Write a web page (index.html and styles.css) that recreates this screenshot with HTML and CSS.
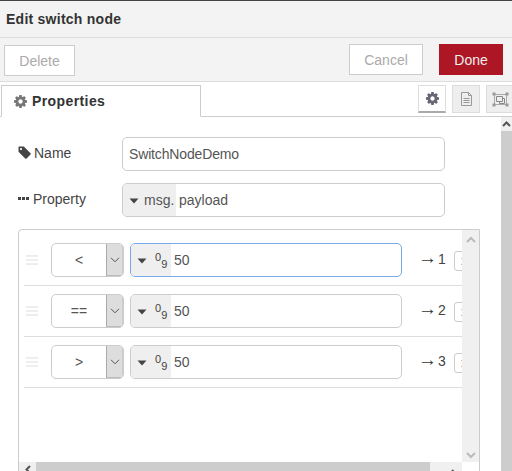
FILE: index.html
```html
<!DOCTYPE html>
<html lang="en">

<head>
    <meta charset="UTF-8">
    <meta name="viewport" content="width=device-width, initial-scale=1.0">
    <title>Edit switch node</title>
    <link rel="stylesheet" href="styles.css">
</head>

<body>
    <svg class="icon-defs" width="0" height="0">
        <symbol id="gear" viewBox="128 128 1536 1536">
            <path d="M1152 896q0-106-75-181t-181-75-181 75-75 181 75 181 181 75 181-75 75-181zm512-109v222q0 12-8 23t-20 13l-185 28q-19 54-39 91 35 50 107 138 10 12 10 25t-9 23q-27 37-99 108t-94 71q-12 0-26-9l-138-108q-44 23-91 38-16 136-29 186-7 28-36 28h-222q-14 0-24.500-8.500t-11.500-21.500l-28-184q-49-16-90-37l-141 107q-10 9-25 9-14 0-25-11-126-114-165-168-7-10-7-23 0-12 8-23 15-21 51-66.500t54-70.500q-27-50-41-99l-183-27q-13-2-21-12.500t-8-23.500v-222q0-12 8-23t19-13l186-28q14-46 39-92-40-57-107-138-10-12-10-24 0-10 9-23 26-36 98.500-107.500t94.500-71.500q13 0 26 10l138 107q44-23 91-38 16-136 29-186 7-28 36-28h222q14 0 24.500 8.500t11.500 21.500l28 184q49 16 90 37l142-107q9-9 24-9 13 0 25 10 129 119 165 170 7 8 7 22 0 12-8 23-15 21-51 66.500t-54 70.500q26 50 41 98l183 28q13 2 21 12.500t8 23.500z" fill="currentColor"></path>
        </symbol>
        <symbol id="caret" viewBox="0 0 10 6">
            <path d="M0.500 0.500h9L5 5.500z" fill="currentColor"></path>
        </symbol>
        <symbol id="grip" viewBox="0 0 12 10">
            <path d="M0 0h12v2H0zM0 4h12v2H0zM0 8h12v2H0z" fill="currentColor"></path>
        </symbol>
        <symbol id="chevron" viewBox="0 0 10 6">
            <path d="M1 0.800l4 4 4-4" fill="none" stroke="currentColor" stroke-width="1"></path>
        </symbol>
        <symbol id="chevron-bold" viewBox="0 0 10 7">
            <path d="M1 1l4 4 4-4" fill="none" stroke="currentColor" stroke-width="2"></path>
        </symbol>
    </svg>

    <header class="tray-header">Edit switch node</header>

    <div class="tray-toolbar">
        <button class="btn btn-delete">Delete</button>
        <div class="toolbar-right">
            <button class="btn btn-cancel">Cancel</button>
            <button class="btn btn-done">Done</button>
        </div>
    </div>

    <div class="tabs">
        <div class="tab-active">
            <svg class="tab-gear"><use href="#gear"></use></svg>
            <span>Properties</span>
        </div>
        <div class="tab-icons">
            <div class="tab-icon selected">
                <svg class="tab-gear dark"><use href="#gear"></use></svg>
            </div>
            <div class="tab-icon">
                <svg width="13" height="14" viewBox="0 0 13 14">
                    <path d="M1.500 0.500h7l3 3v10h-10zM8.500 0.500v3h3M3.500 6.500h6M3.500 8.500h6M3.500 10.500h6" fill="none" stroke="#999" stroke-width="1"></path>
                </svg>
            </div>
            <div class="tab-icon">
                <svg width="17" height="15" viewBox="0 0 17 15">
                    <path d="M2.500 2.500h12v10h-12z" fill="none" stroke="#aaa" stroke-width="1"></path>
                    <path d="M4.500 4.500h6v5h-6zM7.500 9.500v2h5v-5h-2" fill="none" stroke="#888" stroke-width="1"></path>
                    <path d="M0.500 0.500h3v3h-3zM13.500 0.500h3v3h-3zM0.500 11.500h3v3h-3zM13.500 11.500h3v3h-3z" fill="#999"></path>
                </svg>
            </div>
        </div>
    </div>

    <div class="tray-body">
        <main class="form">
            <div class="form-row">
                <label class="form-label">
                    <svg width="13" height="13" viewBox="0 0 13 13">
                        <path d="M0.500 1.200a.7.7 0 0 1 .7-.7h4.600l6.700 6.700a1 1 0 0 1 0 1.400l-3.900 3.900a1 1 0 0 1-1.400 0L0.500 5.800zM3 2a1.100 1.100 0 1 0 0 2.200A1.100 1.100 0 0 0 3 2z" fill="#444" fill-rule="evenodd"></path>
                    </svg>
                    Name
                </label>
                <div class="field">
                    <span class="field-value name-value">SwitchNodeDemo</span>
                </div>
            </div>

            <div class="form-row">
                <label class="form-label">
                    <svg width="12" height="13" viewBox="0 0 12 13">
                        <path d="M0 5h3v3H0zM4 5h3v3H4zM8 5h3v3H8z" fill="#444"></path>
                    </svg>
                    Property
                </label>
                <div class="field">
                    <div class="type-btn">
                        <svg class="caret"><use href="#caret"></use></svg>
                        <span>msg.</span>
                    </div>
                    <span class="field-value">payload</span>
                </div>
            </div>

            <div class="rule-box">
                <div class="rule-main">
                    <ol class="rule-list">
                        <li class="rule">
                            <svg class="grip"><use href="#grip"></use></svg>
                            <div class="op-select">
                                <span class="op-text">&lt;</span>
                                <span class="op-arrow"><svg class="chev"><use href="#chevron"></use></svg></span>
                            </div>
                            <div class="rule-input focused">
                                <div class="type-btn num-btn">
                                    <svg class="caret"><use href="#caret"></use></svg>
                                    <span class="num-icon"><i>0</i><i>9</i></span>
                                </div>
                                <span class="rule-value">50</span>
                            </div>
                            <span class="rule-port"><span class="arrow">&rarr;</span>1</span>
                            <span class="rule-remove">x</span>
                        </li>
                        <li class="rule">
                            <svg class="grip"><use href="#grip"></use></svg>
                            <div class="op-select">
                                <span class="op-text">==</span>
                                <span class="op-arrow"><svg class="chev"><use href="#chevron"></use></svg></span>
                            </div>
                            <div class="rule-input">
                                <div class="type-btn num-btn">
                                    <svg class="caret"><use href="#caret"></use></svg>
                                    <span class="num-icon"><i>0</i><i>9</i></span>
                                </div>
                                <span class="rule-value">50</span>
                            </div>
                            <span class="rule-port"><span class="arrow">&rarr;</span>2</span>
                            <span class="rule-remove">x</span>
                        </li>
                        <li class="rule">
                            <svg class="grip"><use href="#grip"></use></svg>
                            <div class="op-select">
                                <span class="op-text">&gt;</span>
                                <span class="op-arrow"><svg class="chev"><use href="#chevron"></use></svg></span>
                            </div>
                            <div class="rule-input">
                                <div class="type-btn num-btn">
                                    <svg class="caret"><use href="#caret"></use></svg>
                                    <span class="num-icon"><i>0</i><i>9</i></span>
                                </div>
                                <span class="rule-value">50</span>
                            </div>
                            <span class="rule-port"><span class="arrow">&rarr;</span>3</span>
                            <span class="rule-remove">x</span>
                        </li>
                    </ol>
                    <div class="vscroll">
                        <svg class="chev-bold up"><use href="#chevron-bold"></use></svg>
                        <svg class="chev-bold"><use href="#chevron-bold"></use></svg>
                    </div>
                </div>
                <div class="hscroll">
                    <span class="hscroll-left">
                        <svg width="6" height="9" viewBox="0 0 6 9"><path d="M5 1L1.500 4.500 5 8" fill="none" stroke="#555" stroke-width="2"></path></svg>
                    </span>
                    <span class="hscroll-thumb"></span>
                    <span class="hscroll-right">
                        <svg width="6" height="9" viewBox="0 0 6 9"><path d="M1 1l3.500 3.500L1 8" fill="none" stroke="#555" stroke-width="2"></path></svg>
                    </span>
                </div>
            </div>
        </main>

        <div class="page-scroll">
            <span class="page-scroll-up">
                <svg width="9" height="6" viewBox="0 0 9 6"><path d="M1 5l3.500-3.500L8 5" fill="none" stroke="#555" stroke-width="2"></path></svg>
            </span>
        </div>
    </div>
</body>

</html>
```

FILE: styles.css
```css
* {
    box-sizing: border-box;
}

html, body {
    margin: 0;
    padding: 0;
    width: 512px;
    height: 471px;
    overflow: hidden;
}

body {
    display: flex;
    flex-direction: column;
    font-family: "Liberation Sans", Arial, sans-serif;
    font-size: 14px;
    color: #444;
    background-color: #fff;
}

.icon-defs {
    position: absolute;
}

/* header and buttons */
.tray-header {
    height: 38px;
    padding: 0 6px;
    line-height: 36px;
    font-weight: bold;
    letter-spacing: 0.25px;
    color: #333;
    background-color: #f3f3f3;
    border-top: 1px solid #444;
    border-bottom: 1px solid #ddd;
}

.tray-toolbar {
    display: flex;
    justify-content: space-between;
    height: 44px;
    padding: 6px 9px 0 4px;
    background-color: #f3f3f3;
    border-bottom: 1px solid #ddd;
}

.toolbar-right {
    display: flex;
    gap: 16px;
}

.btn {
    height: 31px;
    padding: 0;
    font-family: inherit;
    font-size: 14px;
    background-color: #fff;
    border: 1px solid #ccc;
    color: #aaa;
}

.btn-delete {
    width: 71px;
    margin-top: 1px;
}

.btn-cancel {
    width: 74px;
}

.btn-done {
    width: 64px;
    color: #eee;
    background-color: #ad1625;
    border-color: #ad1625;
}

/* tabs */
.tabs {
    display: flex;
    justify-content: space-between;
    height: 35px;
    padding: 3px 0 0 1px;
    border-bottom: 1px solid #ccc;
}

.tab-active {
    display: flex;
    align-items: center;
    gap: 5px;
    width: 200px;
    height: 32px;
    padding: 0 0 0 12px;
    font-weight: bold;
    letter-spacing: 0.4px;
    color: #333;
    background-color: #fff;
    border: 1px solid #ccc;
    border-bottom: 1px solid #fff;
}

.tab-gear {
    width: 13px;
    height: 13px;
    color: #777;
}

.tab-gear.dark {
    color: #667;
}

.tab-icons {
    display: flex;
    gap: 6px;
    margin-right: -2px;
}

.tab-icon {
    display: flex;
    align-items: center;
    justify-content: center;
    width: 28px;
    height: 28px;
    background-color: #eee;
    border: 1px solid #ddd;
}

.tab-icon.selected {
    background-color: #fff;
    border-bottom: 2px solid #aaa;
}

/* form */
.tray-body {
    display: flex;
    flex: 1;
    min-height: 0;
}

.form {
    flex: 1;
    padding: 20px 21px 0 18px;
    min-width: 0;
}

.form-row {
    display: flex;
    align-items: center;
    height: 34px;
    margin-bottom: 12px;
}

.form-label {
    display: flex;
    align-items: center;
    gap: 3px;
    width: 104px;
    padding-bottom: 3px;
}

.field {
    display: flex;
    align-items: center;
    width: 323px;
    height: 34px;
    background-color: #fff;
    border: 1px solid #ccc;
    border-radius: 5px;
    overflow: hidden;
}

.field-value {
    padding-left: 3px;
    color: #555;
}

.name-value {
    padding-left: 6px;
    letter-spacing: -0.15px;
}

.type-btn {
    display: flex;
    align-items: center;
    gap: 5px;
    width: 53px;
    height: 100%;
    padding-left: 6px;
    color: #555;
    background-color: #efefef;
}

.caret {
    width: 10px;
    height: 6px;
    margin-top: 1px;
    color: #444;
}

/* rule list */
.rule-box {
    height: 260px;
    display: flex;
    flex-direction: column;
    border: 1px solid #ccc;
    border-radius: 4px 0 0 0;
}

.rule-main {
    display: flex;
    height: 232px;
}

.rule-list {
    flex: 1;
    min-width: 0;
    margin: 0;
    padding: 13px 0 0 5px;
    list-style: none;
    overflow: hidden;
}

.rule {
    display: flex;
    align-items: flex-start;
    width: 500px;
    height: 51px;
    padding-bottom: 8px;
    position: relative;
}

/* divider only runs as far as the visible list */
.rule::after {
    content: "";
    position: absolute;
    left: 0;
    top: 42px;
    width: 439px;
    height: 1px;
    background-color: #ddd;
}

.grip {
    width: 12px;
    height: 10px;
    margin: 12px 13px 0 2px;
    flex: none;
    color: #eee;
}

.op-select {
    display: flex;
    flex: none;
    width: 73px;
    height: 34px;
    border: 1px solid #ccc;
    border-radius: 5px;
    overflow: hidden;
}

.op-text {
    flex: 1;
    text-align: center;
    line-height: 33px;
    font-size: 14px;
    color: #555;
}

.op-arrow {
    display: flex;
    align-items: center;
    justify-content: center;
    width: 17px;
    background-color: #ddd;
    border-left: 1px solid #aaa;
    border-right: 1px solid #ccc;
    border-bottom: 1px solid #bbb;
}

.chev {
    width: 10px;
    height: 6px;
    color: #555;
}

.rule-input {
    display: flex;
    flex: none;
    width: 272px;
    height: 34px;
    margin-left: 6px;
    border: 1px solid #ccc;
    border-radius: 5px;
    overflow: hidden;
}

.rule-input.focused {
    border-color: #75a9ea;
}

.num-btn {
    width: 40px;
    gap: 8px;
}

.num-icon {
    display: flex;
    align-items: flex-start;
    height: 15px;
    font-size: 11px;
    line-height: 8px;
    color: #444;
}

.num-icon i {
    font-style: normal;
}

.num-icon i + i {
    margin-top: 7px;
}

.rule-value {
    padding-left: 3px;
    line-height: 33px;
    font-size: 14px;
    color: #555;
}

.rule-port {
    display: flex;
    align-items: center;
    flex: none;
    width: 34px;
    height: 32px;
    margin-left: 18px;
    font-size: 14px;
    color: #444;
}

.rule-port .arrow {
    margin: 0 1px 2px -2px;
    font-size: 19px;
    line-height: 30px;
    color: #333;
}

.rule-remove {
    flex: none;
    width: 24px;
    height: 20px;
    margin-top: 8px;
    padding-left: 6px;
    line-height: 18px;
    font-size: 12px;
    color: #888;
    border: 1px solid #ccc;
    border-radius: 3px;
}

.vscroll {
    display: flex;
    flex: none;
    flex-direction: column;
    align-items: center;
    justify-content: space-between;
    width: 17px;
    padding: 6px 0 3px;
    background-color: #f0f0f0;
}

.chev-bold {
    width: 10px;
    height: 7px;
    color: #bbb;
}

.chev-bold.up {
    transform: scaleY(-1);
}

.hscroll {
    display: flex;
    height: 17px;
    margin-right: 17px;
    background-color: #f0f0f0;
}

.hscroll-left {
    display: flex;
    justify-content: center;
    width: 17px;
    padding-top: 3px;
}

.hscroll-thumb {
    width: 394px;
    background-color: #cdcdcd;
}

.hscroll-right {
    flex: 1;
    padding: 3px 0 0 21px;
}

.page-scroll {
    width: 11px;
    flex: none;
    background-color: #cdcdcd;
}

.page-scroll-up {
    display: flex;
    justify-content: center;
    height: 14px;
    padding-top: 4px;
    background-color: #f0f0f0;
}
```
